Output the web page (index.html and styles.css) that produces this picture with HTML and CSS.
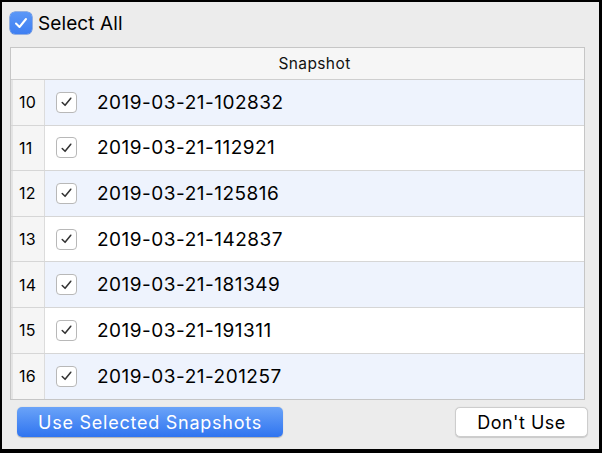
FILE: index.html
```html
<!DOCTYPE html>
<html>
<head>
<meta charset="utf-8">
<link rel="stylesheet" href="styles.css">
</head>
<body>
<div class="window">
  <label class="select-all">
    <span class="cb cb-blue"><svg viewBox="0 0 22 22" width="22" height="22"><path d="M6 11.5 L9.5 15 L16 7" fill="none" stroke="#fff" stroke-width="2" stroke-linecap="round" stroke-linejoin="round"/></svg></span>
    <span class="select-text">Select All</span>
  </label>
  <div class="table">
    <div class="thead">
      <div class="th-num"></div>
      <div class="th-snap">Snapshot</div>
    </div>
    <div class="row alt"><div class="num">10</div><div class="cell"><span class="cb cb-white"><svg viewBox="0 0 20 20" width="20" height="20"><path d="M5.5 10.5 L8.5 13.5 L14.5 6" fill="none" stroke="#333" stroke-width="1.6" stroke-linecap="round" stroke-linejoin="round"/></svg></span><span class="name">2019-03-21-102832</span></div></div>
    <div class="row"><div class="num">11</div><div class="cell"><span class="cb cb-white"><svg viewBox="0 0 20 20" width="20" height="20"><path d="M5.5 10.5 L8.5 13.5 L14.5 6" fill="none" stroke="#333" stroke-width="1.6" stroke-linecap="round" stroke-linejoin="round"/></svg></span><span class="name">2019-03-21-112921</span></div></div>
    <div class="row alt"><div class="num">12</div><div class="cell"><span class="cb cb-white"><svg viewBox="0 0 20 20" width="20" height="20"><path d="M5.5 10.5 L8.5 13.5 L14.5 6" fill="none" stroke="#333" stroke-width="1.6" stroke-linecap="round" stroke-linejoin="round"/></svg></span><span class="name">2019-03-21-125816</span></div></div>
    <div class="row"><div class="num">13</div><div class="cell"><span class="cb cb-white"><svg viewBox="0 0 20 20" width="20" height="20"><path d="M5.5 10.5 L8.5 13.5 L14.5 6" fill="none" stroke="#333" stroke-width="1.6" stroke-linecap="round" stroke-linejoin="round"/></svg></span><span class="name">2019-03-21-142837</span></div></div>
    <div class="row alt"><div class="num">14</div><div class="cell"><span class="cb cb-white"><svg viewBox="0 0 20 20" width="20" height="20"><path d="M5.5 10.5 L8.5 13.5 L14.5 6" fill="none" stroke="#333" stroke-width="1.6" stroke-linecap="round" stroke-linejoin="round"/></svg></span><span class="name">2019-03-21-181349</span></div></div>
    <div class="row"><div class="num">15</div><div class="cell"><span class="cb cb-white"><svg viewBox="0 0 20 20" width="20" height="20"><path d="M5.5 10.5 L8.5 13.5 L14.5 6" fill="none" stroke="#333" stroke-width="1.6" stroke-linecap="round" stroke-linejoin="round"/></svg></span><span class="name">2019-03-21-191311</span></div></div>
    <div class="row alt last"><div class="num">16</div><div class="cell"><span class="cb cb-white"><svg viewBox="0 0 20 20" width="20" height="20"><path d="M5.5 10.5 L8.5 13.5 L14.5 6" fill="none" stroke="#333" stroke-width="1.6" stroke-linecap="round" stroke-linejoin="round"/></svg></span><span class="name">2019-03-21-201257</span></div></div>
  </div>
  <div class="buttons">
    <button class="btn btn-primary">Use Selected Snapshots</button>
    <button class="btn btn-plain">Don't Use</button>
  </div>
</div>
</body>
</html>
```

FILE: styles.css
```css
html, body {
  margin: 0;
  padding: 0;
  background: #000;
}
body {
  width: 602px;
  height: 453px;
  overflow: hidden;
  font-family: Inter, "Liberation Sans", sans-serif;
  color: #000;
}
.window {
  margin: 2px 3px 4px 2px;
  height: 447px;
  background: #ececec;
  box-sizing: border-box;
  padding-top: 10px;
}
.select-all {
  display: flex;
  align-items: center;
  gap: 6px;
  margin-left: 8px;
  height: 22px;
}
.cb {
  display: flex;
  box-sizing: border-box;
  flex: none;
}
.cb-blue {
  width: 22px;
  height: 22px;
  border-radius: 5px;
  background: linear-gradient(#5b97f7, #3f7ff2);
  box-shadow: 0 0 0 0.5px #3b73d6;
}
.select-text {
  font-size: 19px;
  letter-spacing: 0.1px;
  color: #000;
  margin-top: 1px;
}
.table {
  margin: 13px 14px 0 8px;
  border: 1px solid #c6c6c6;
  background: #fff;
}
.thead {
  display: flex;
  height: 32px;
  background: #f6f6f6;
  border-bottom: 1px solid #cfcfcf;
  box-sizing: border-box;
}
.th-num {
  width: 34px;
  flex: none;
}
.th-snap {
  flex: 1;
  display: flex;
  align-items: center;
  justify-content: center;
  font-size: 15.5px;
  letter-spacing: 0.4px;
  color: #111;
}
.row {
  display: flex;
  height: 45.6px;
  box-sizing: border-box;
  border-bottom: 1px solid #d6d6d6;
  background: #fff;
}
.row.last {
  border-bottom: none;
}
.row.alt {
  background: #eef3fd;
}
.num {
  width: 34px;
  flex: none;
  box-sizing: border-box;
  background: #f5f5f5;
  border-left: 2px solid #e4e4e4;
  border-right: 1px solid #dcdcdc;
  display: flex;
  align-items: center;
  padding-left: 6px;
  font-size: 16px;
  letter-spacing: 0.3px;
  color: #000;
}
.cell {
  flex: 1;
  display: flex;
  align-items: center;
  padding-left: 11px;
}
.cb-white {
  width: 21px;
  height: 21px;
  border-radius: 4px;
  background: #fff;
  border: 1px solid #b8b8b8;
  align-items: center;
  justify-content: center;
}
.name {
  margin-left: 20px;
  font-size: 19px;
  letter-spacing: 0.5px;
  color: #000;
}
.buttons {
  display: flex;
  justify-content: space-between;
  margin: 7px 11px 0 15px;
}
.btn {
  font-family: Inter, "Liberation Sans", sans-serif;
  font-size: 18px;
  height: 30px;
  box-sizing: border-box;
  border-radius: 5px;
  padding: 0;
  display: flex;
  align-items: center;
  justify-content: center;
}
.btn-primary {
  width: 266px;
  color: #fff;
  border: none;
  letter-spacing: 0.75px;
  background: linear-gradient(#6aa3f8, #2f74f0);
  box-shadow: 0 0.5px 1px rgba(0,0,0,0.25);
}
.btn-plain {
  width: 133px;
  color: #000;
  letter-spacing: 0.5px;
  background: #fff;
  border: 1px solid #cdcdcd;
  box-shadow: 0 0.5px 1px rgba(0,0,0,0.15);
}
```
